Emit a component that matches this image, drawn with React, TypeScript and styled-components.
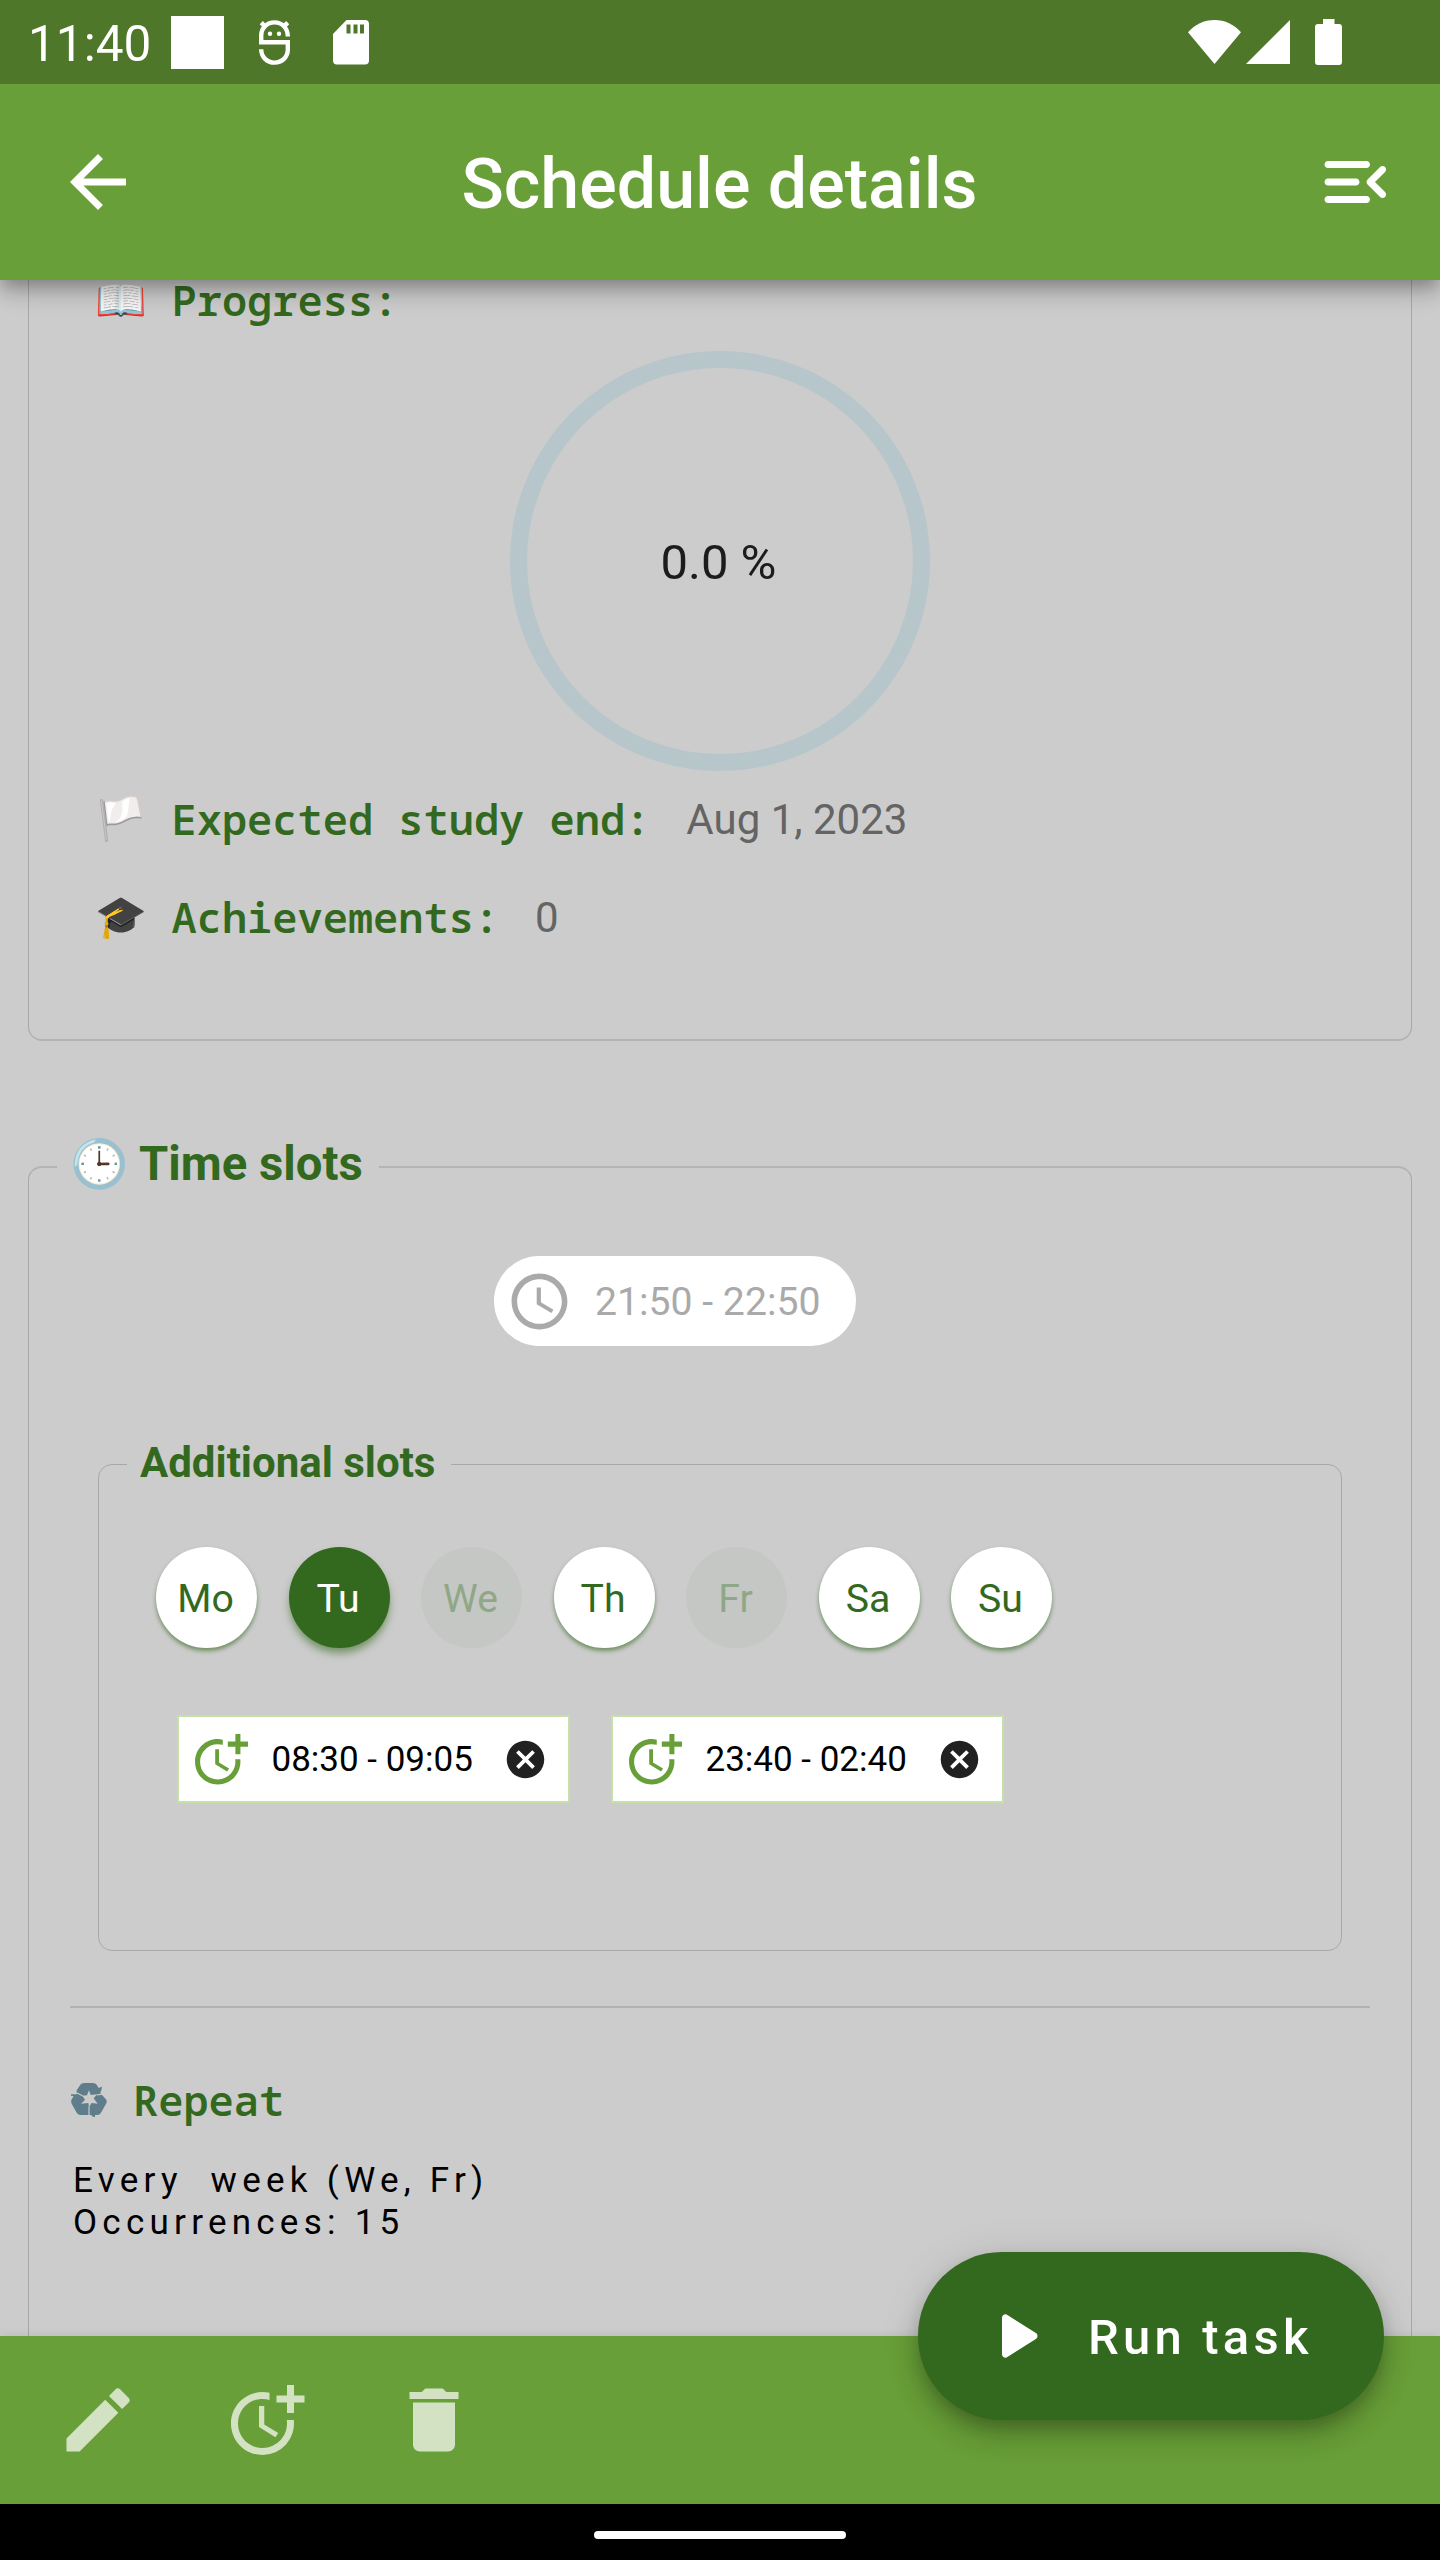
import React from 'react';
import styled, { createGlobalStyle } from 'styled-components';
import { MdArrowBack, MdCancel, MdDelete, MdEdit, MdMoreTime, MdSchedule } from 'react-icons/md';

const c = {
  bar: '#689f38',
  status: '#4e772a',
  dark: '#33691e',
  body: '#cccccc',
  line: '#a8a8a8',
};

const Global = createGlobalStyle`
  *, *::before, *::after { box-sizing: border-box; }
  body { margin: 0; background: ${c.body}; }
  svg { display: block; flex: none; }
`;

const Screen = styled.div`
  position: relative;
  display: flex;
  flex-direction: column;
  width: 1440px;
  height: 2560px;
  overflow: hidden;
  background: ${c.body};
  font-family: Roboto, 'Noto Color Emoji', sans-serif;
  white-space: pre;
`;

const StatusBar = styled.header`
  display: flex;
  align-items: center;
  height: 84px;
  padding: 0 98px 0 27px;
  flex: none;
  background: ${c.status};
  color: #fff;
`;

const StatusTime = styled.span`
  width: 144px;
  font-size: 49.5px;
  line-height: 56px;
  padding: 4px 0 0 1px;
`;

const StatusSquare = styled.span`
  width: 53px;
  height: 53px;
  background: #fff;
`;

const StatusIcons = styled.div`
  display: flex;
  align-items: center;
  gap: 43px;
  margin-left: 35px;
`;

const StatusSignals = styled.div`
  display: flex;
  align-items: center;
  margin-left: auto;
`;

const SignalGap = styled.div`
  padding: 0 25px 0 5px;
`;

const AppBar = styled.div`
  position: relative;
  z-index: 1;
  display: flex;
  align-items: center;
  justify-content: space-between;
  height: 196px;
  padding: 0 42px 0 56px;
  flex: none;
  background: ${c.bar};
  color: #fff;
  box-shadow: 0 7px 14px -3px rgba(0, 0, 0, 0.2), 0 14px 18px rgba(0, 0, 0, 0.14), 0 3px 35px rgba(0, 0, 0, 0.12);
  clip-path: inset(0 0 -60px 0);
`;

const Title = styled.h1`
  margin: 0;
  padding: 4px 15px 0 0;
  font-size: 70px;
  font-weight: 500;
  line-height: 82px;
`;

const Content = styled.main`
  display: flex;
  flex-direction: column;
  height: 2086px;
  flex: none;
  margin-top: -30px;
  padding: 30px 28px 0;
  overflow: hidden;
`;

const StatsCard = styled.section`
  height: 761px;
  flex: none;
  padding: 0 66px;
  border: 1px solid ${c.line};
  border-bottom: 2px solid #b4b4b4;
  border-top: 0;
  border-radius: 0 0 14px 14px;
`;

const StatRow = styled.div<{ $top?: boolean }>`
  display: flex;
  align-items: ${(p) => (p.$top ? 'flex-start' : 'center')};
  height: ${(p) => (p.$top ? 71 : 98)}px;
  padding-bottom: ${(p) => (p.$top ? 0 : 2)}px;
  font-size: 42px;
`;

const Emoji = styled.span<{ $w: number; $size?: number }>`
  width: ${(p) => p.$w}px;
  font-size: ${(p) => p.$size ?? 41.5}px;
  line-height: 42px;
`;

const MonoLabel = styled.h2`
  margin: 0;
  font-family: 'Noto Sans Mono', 'DejaVu Sans Mono', monospace;
  font-size: 42px;
  font-weight: 600;
  line-height: 40px;
  padding-bottom: 1px;
  color: ${c.dark};
`;

const StatValue = styled.span`
  padding-left: 36px;
  color: #646464;
`;

const Ring = styled.div`
  display: flex;
  align-items: center;
  justify-content: center;
  width: 420px;
  height: 420px;
  margin: 0 auto;
  border: 17.5px solid #b7c6cb;
  border-radius: 50%;
  font-size: 49px;
  color: #1c1c1c;
  padding: 3px 3px 0 0;
`;

const Group = styled.section<{ $inner?: boolean }>`
  display: flex;
  flex-direction: column;
  flex: none;
  height: ${(p) => (p.$inner ? 487 : 1200)}px;
  margin: ${(p) => (p.$inner ? '118px 42px 0 42px' : '125px 0 0')};
  padding: 0 ${(p) => (p.$inner ? 29 : 27)}px;
  border: 1px solid ${c.line};
  border-top: ${(p) => (p.$inner ? `1px solid ${c.line}` : '2px solid #b4b4b4')};
  border-radius: 14px;
`;

const Legend = styled.h2<{ $inner?: boolean }>`
  display: flex;
  align-items: center;
  align-self: flex-start;
  height: 60px;
  margin: ${(p) => (p.$inner ? '-33px 0 0 -1px' : '-34px 0 1px 1px')};
  padding: ${(p) => (p.$inner ? '0 16px 0 13px' : '0 16px 0 13px')};
  background: ${c.body};
  color: ${c.dark};
  font-size: ${(p) => (p.$inner ? 42 : 47.25)}px;
  font-weight: 700;
`;

const MainSlot = styled.div`
  display: flex;
  align-items: center;
  gap: 22px;
  width: 362px;
  height: 90px;
  margin: 61px 0 0 438px;
  padding-left: 12px;
  border-radius: 45px;
  background: #fff;
  color: #aaa;
  font-size: 39.2px;
`;

const MainSlotTime = styled.span`
  padding-top: 2px;
`;

const Days = styled.div`
  display: flex;
  gap: 31.5px;
  margin: 55px 0 0 28px;
`;

const Day = styled.div<{ $state: 'on' | 'off' | 'disabled' }>`
  display: flex;
  align-items: center;
  justify-content: center;
  width: 101px;
  height: 101px;
  border-radius: 50%;
  font-size: 39.2px;
  padding: 2px 2px 0 0;
  background: ${(p) => ({ on: c.dark, off: '#fff', disabled: '#c5c7c4' })[p.$state]};
  color: ${(p) => ({ on: '#fff', off: c.dark, disabled: '#8fa787' })[p.$state]};
  box-shadow: ${(p) =>
    ({
      on: '0 6px 9px -1px rgba(51, 105, 30, 0.6)',
      off: '0 3px 4px rgba(51, 105, 30, 0.6)',
      disabled: 'none',
    })[p.$state]};
`;

const Slots = styled.div`
  display: flex;
  gap: 41px;
  margin: 67px 0 0 49px;
`;

const Slot = styled.div`
  display: flex;
  align-items: center;
  width: 393px;
  height: 88px;
  padding: 0 20px 0 11px;
  border: 2px solid #c5e1a5;
  background: #fff;
  font-size: 35px;
  color: #000;
`;

const SlotTime = styled.span`
  flex: 1;
  padding-left: 21px;
`;

const Divider = styled.div`
  height: 2px;
  margin: 55px 14px 0;
  background: #b2b2b2;
`;

const RepeatHead = styled.div`
  display: flex;
  align-items: center;
  gap: 26px;
  height: 56px;
  margin: 64px 0 0 15px;
`;

const RepeatText = styled.p`
  margin: 32px 0 0 17px;
  font-size: 35px;
  line-height: 42px;
  letter-spacing: 5.25px;
  color: #000;
`;

const BottomBar = styled.nav`
  display: flex;
  align-items: center;
  gap: 84px;
  height: 168px;
  padding-left: 56px;
  flex: none;
  background: ${c.bar};
  color: rgba(255, 255, 255, 0.7);
  box-shadow: 0 0 10px rgba(0, 0, 0, 0.1);
`;

const NavArea = styled.div`
  display: flex;
  justify-content: center;
  height: 56px;
  flex: none;
  padding-top: 27px;
  background: #000;
`;

const NavPill = styled.div`
  width: 252px;
  height: 8px;
  border-radius: 4px;
  background: #fff;
`;

const RunButton = styled.button`
  position: absolute;
  left: 918px;
  top: 2252px;
  display: flex;
  align-items: center;
  gap: 30px;
  width: 466px;
  height: 168px;
  padding: 0 0 0 56px;
  border: 0;
  border-radius: 84px;
  background: ${c.dark};
  color: #fff;
  font: 500 49px Roboto, sans-serif;
  letter-spacing: 4.2px;
  box-shadow: 0 10px 17px -3px rgba(0, 0, 0, 0.2), 0 18px 30px rgba(0, 0, 0, 0.14), 0 3px 40px rgba(0, 0, 0, 0.1);
`;

const RunLabel = styled.span`
  padding-top: 2px;
`;

const DebugIcon = () => (
  <svg width="31" height="45" viewBox="0 0 31 45" fill="none" stroke="#fff" strokeWidth="4.4">
    <path d="M2.200 22.200V15.500C2.200 8 8 2.400 15.500 2.400S28.800 8 28.800 16.500M0 22.200H28.800V29.500C28.800 37 23 42.600 15.500 42.600S2.200 37 2.200 29.200" />
    <path d="M2.300 2.600l4.500 4.500M28.700 2.600l-4.500 4.500" />
    <circle cx="11" cy="13.800" r="2.200" fill="#fff" stroke="none" />
    <circle cx="20" cy="13.800" r="2.200" fill="#fff" stroke="none" />
  </svg>
);

const SdIcon = () => (
  <svg width="36" height="45" viewBox="0 0 36 45" fill="#fff">
    <path fillRule="evenodd" d="M13.500 0H32a4 4 0 0 1 4 4v36.500a4 4 0 0 1-4 4H4a4 4 0 0 1-4-4V14zM13.500 4.500v9h4v-9zm7 0v9h4v-9zm6.500 0v9h4v-9z" />
  </svg>
);

const WifiIcon = () => (
  <svg width="53" height="44" viewBox="0 0 53 44" fill="#fff">
    <path d="M0 12.300C7 4.500 16 0 26.500 0S46 4.500 53 12.300L26.500 44z" />
  </svg>
);

const SignalIcon = () => (
  <svg width="44" height="44" viewBox="0 0 44 44" fill="#fff">
    <path d="M0 44L44 0v44z" />
  </svg>
);

const BatteryIcon = () => (
  <svg width="27" height="46" viewBox="0 0 27 46" fill="#fff">
    <path d="M8 0h11.500v5H24a3 3 0 0 1 3 3v35a3 3 0 0 1-3 3H3a3 3 0 0 1-3-3V8a3 3 0 0 1 3-3h5z" />
  </svg>
);

const MenuOpenIcon = () => (
  <svg width="84" height="84" viewBox="0 0 24 24" fill="currentColor">
    <path d="M4 18h11c.55 0 1-.45 1-1s-.45-1-1-1H4c-.55 0-1 .45-1 1s.45 1 1 1zm0-5h8c.55 0 1-.45 1-1s-.45-1-1-1H4c-.55 0-1 .45-1 1s.45 1 1 1zM3 7c0 .55.45 1 1 1h11c.55 0 1-.45 1-1s-.45-1-1-1H4c-.55 0-1 .45-1 1zm17.300 7.880L17.420 12l2.880-2.880c.39-.39.39-1.020 0-1.410-.39-.39-1.020-.39-1.410 0L15.300 11.300c-.39.39-.39 1.020 0 1.410l3.590 3.590c.39.39 1.020.39 1.410 0 .38-.39.39-1.030 0-1.420z" />
  </svg>
);

const PlayIcon = () => (
  <svg width="84" height="84" viewBox="0 0 24 24" fill="currentColor">
    <path d="M8 6.820v10.360c0 .79.87 1.270 1.540.84l8.140-5.180c.62-.39.62-1.290 0-1.690L9.540 5.980C8.870 5.550 8 6.030 8 6.820z" />
  </svg>
);

const RecycleIcon = () => (
  <svg width="36" height="34" viewBox="0 0 108 102">
    <path
      fill="#607d8b"
      fillRule="evenodd"
      d="M40 0H66Q73 0 77 5L83 15L92 11L93 14L88 30L106 50Q108 56 106 61L90 89Q86 96 79 96H72V102H67L60 96H29Q21 96 17 89L2 62Q-1 56 2 49L8 40L0 38V34H17V22L28 5Q32 0 40 0ZM54 22L48 37L34 38L42 50L30 62L52 60L54 72L62 60L80 62L68 46L78 34L59 36Z"
    />
    <path fill="none" stroke={c.body} strokeWidth="3.500" d="M36 39L20 31L10 30M77 36L88 34L100 34M54 70V98" />
  </svg>
);

const days: { label: string; state: 'on' | 'off' | 'disabled' }[] = [
  { label: 'Mo', state: 'off' },
  { label: 'Tu', state: 'on' },
  { label: 'We', state: 'disabled' },
  { label: 'Th', state: 'off' },
  { label: 'Fr', state: 'disabled' },
  { label: 'Sa', state: 'off' },
  { label: 'Su', state: 'off' },
];

const slots = ['08:30 - 09:05', '23:40 - 02:40'];

export default function App() {
  return (
    <Screen>
      <Global />
      <StatusBar>
        <StatusTime>11:40</StatusTime>
        <StatusSquare />
        <StatusIcons>
          <DebugIcon />
          <SdIcon />
        </StatusIcons>
        <StatusSignals>
          <WifiIcon />
          <SignalGap>
            <SignalIcon />
          </SignalGap>
          <BatteryIcon />
        </StatusSignals>
      </StatusBar>
      <AppBar>
        <MdArrowBack size={84} />
        <Title>Schedule details</Title>
        <MenuOpenIcon />
      </AppBar>
      <Content>
        <StatsCard>
          <StatRow $top>
            <Emoji $w={76.5}>📖</Emoji>
            <MonoLabel>Progress:</MonoLabel>
          </StatRow>
          <Ring>0.0 %</Ring>
          <StatRow>
            <Emoji $w={76.5}>🏳️</Emoji>
            <MonoLabel>Expected study end:</MonoLabel>
            <StatValue>Aug 1, 2023</StatValue>
          </StatRow>
          <StatRow>
            <Emoji $w={76.5}>🎓</Emoji>
            <MonoLabel>Achievements:</MonoLabel>
            <StatValue>0</StatValue>
          </StatRow>
        </StatsCard>
        <Group>
          <Legend>
            <Emoji $w={69} $size={47}>🕒</Emoji>
            Time slots
          </Legend>
          <MainSlot>
            <MdSchedule size={67} />
            <MainSlotTime>21:50 - 22:50</MainSlotTime>
          </MainSlot>
          <Group $inner>
            <Legend $inner>Additional slots</Legend>
            <Days>
              {days.map((d) => (
                <Day key={d.label} $state={d.state}>
                  {d.label}
                </Day>
              ))}
            </Days>
            <Slots>
              {slots.map((s) => (
                <Slot key={s}>
                  <MdMoreTime size={60.5} color={c.bar} />
                  <SlotTime>{s}</SlotTime>
                  <MdCancel size={45} color="#212121" />
                </Slot>
              ))}
            </Slots>
          </Group>
          <Divider />
          <RepeatHead>
            <RecycleIcon />
            <MonoLabel>Repeat</MonoLabel>
          </RepeatHead>
          <RepeatText>{'Every  week (We, Fr)\nOccurrences: 15'}</RepeatText>
        </Group>
      </Content>
      <BottomBar>
        <MdEdit size={84} />
        <MdMoreTime size={84} />
        <MdDelete size={84} />
      </BottomBar>
      <NavArea>
        <NavPill />
      </NavArea>
      <RunButton>
        <PlayIcon />
        <RunLabel>Run task</RunLabel>
      </RunButton>
    </Screen>
  );
}
